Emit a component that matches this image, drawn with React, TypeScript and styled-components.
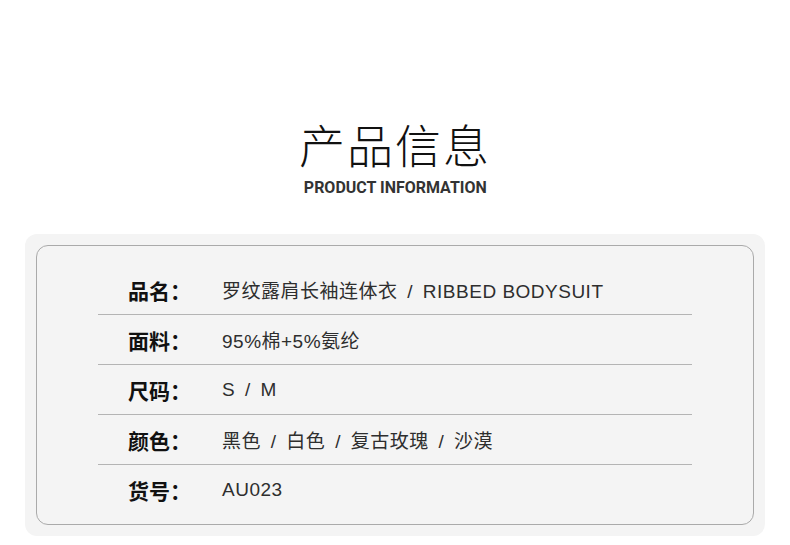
import React from "react";
import styled, { createGlobalStyle } from "styled-components";

const GlobalStyle = createGlobalStyle`
  html, body {
    margin: 0;
    padding: 0;
    background: #ffffff;
  }
  body {
    font-family: "Noto Sans CJK SC", "Noto Sans", sans-serif;
  }
`;

const Page = styled.div`
  width: 790px;
  height: 545px;
  display: flex;
  flex-direction: column;
  align-items: center;
  overflow: hidden;
`;

const Header = styled.div`
  display: flex;
  flex-direction: column;
  align-items: center;
  padding-top: 112px;
  margin-bottom: 37px;
`;

const Title = styled.h1`
  margin: 0;
  font-family: "Noto Sans CJK SC", sans-serif;
  font-weight: 300;
  font-size: 46px;
  line-height: 62px;
  color: #111;
  letter-spacing: 2px;
`;

const Subtitle = styled.div`
  margin-top: 3px;
  font-family: Roboto, "Liberation Sans", sans-serif;
  font-weight: 700;
  font-size: 17px;
  line-height: 20px;
  color: #333;
  transform: scaleX(0.94);
`;

const Panel = styled.div`
  width: 740px;
  height: 302px;
  flex-shrink: 0;
  box-sizing: border-box;
  background: #f4f4f4;
  border-radius: 12px;
  padding: 11px;
`;

const Inner = styled.div`
  height: 100%;
  box-sizing: border-box;
  border: 1px solid #aaaaaa;
  border-radius: 12px;
  padding: 19px 61px 0;
`;

const Row = styled.div<{ last?: boolean }>`
  display: flex;
  align-items: center;
  height: 49px;
  padding-left: 30px;
  border-bottom: ${(p) => (p.last ? "none" : "1px solid #b4b4b4")};
`;

const Label = styled.div`
  width: 94px;
  font-family: "Noto Sans CJK SC", sans-serif;
  font-weight: 700;
  font-size: 21px;
  color: #111;
`;

const Value = styled.div`
  font-family: "Liberation Sans", "Noto Sans CJK SC", sans-serif;
  font-weight: 400;
  font-size: 19px;
  color: #2e2e2e;
  letter-spacing: 0.5px;
  white-space: pre;
`;

const Sep = styled.span`
  word-spacing: 4px;
`;

const rows = [
  { label: "品名", parts: ["罗纹露肩长袖连体衣", "RIBBED BODYSUIT"] },
  { label: "面料", parts: ["95%棉+5%氨纶"] },
  { label: "尺码", parts: ["S", "M"] },
  { label: "颜色", parts: ["黑色", "白色", "复古玫瑰", "沙漠"] },
  { label: "货号", parts: ["AU023"] },
];

export default function App() {
  return (
    <Page>
      <GlobalStyle />
      <Header>
        <Title>产品信息</Title>
        <Subtitle>PRODUCT INFORMATION</Subtitle>
      </Header>
      <Panel>
        <Inner>
          {rows.map((r, i) => (
            <Row key={r.label} last={i === rows.length - 1}>
              <Label>{r.label}：</Label>
              <Value>
                {r.parts.map((p, j) => (
                  <React.Fragment key={p}>
                    {j > 0 && <Sep> / </Sep>}
                    {p}
                  </React.Fragment>
                ))}
              </Value>
            </Row>
          ))}
        </Inner>
      </Panel>
    </Page>
  );
}
